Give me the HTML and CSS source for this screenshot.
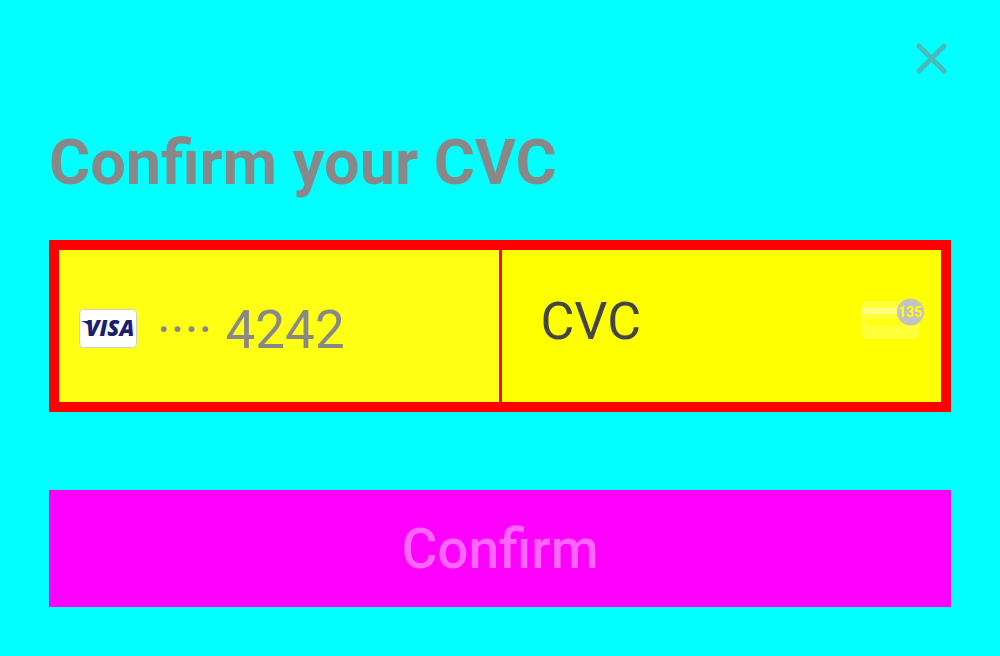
FILE: index.html
```html
<!DOCTYPE html>
<html lang="en">
<head>
<meta charset="utf-8">
<meta name="viewport" content="width=device-width, initial-scale=1">
<title>Confirm your CVC</title>
<link rel="stylesheet" href="styles.css">
</head>
<body>
<main class="sheet">
  <header class="sheet-top">
    <button class="close" type="button" aria-label="Close">
      <svg class="close-icon" viewBox="0 0 32 32" aria-hidden="true"><path d="M4 4 29 29M29 4 4 29"/></svg>
    </button>
  </header>
  <form class="form">
    <h1 class="title">Confirm your CVC</h1>
    <div class="field">
      <div class="card">
        <svg class="visa" viewBox="0 0 58 39" role="img" aria-label="Visa">
          <rect class="visa-plate" x=".5" y=".5" width="57" height="38" rx="4"/>
          <text class="visa-text" x="7" y="27">VISA</text>
          <path class="visa-mark" d="M3 12H9Q11 12 11.500 14L13 22Q10 14 3 12.500Z"/>
        </svg>
        <span class="digits">···· 4242</span>
      </div>
      <div class="cvc">
        <input class="cvc-input" type="text" inputmode="numeric" placeholder="CVC" aria-label="CVC">
        <svg class="cvc-icon" viewBox="0 0 64 42" aria-hidden="true">
          <rect x="1" y="3" width="57" height="38" rx="4" fill="#ffff38"/>
          <rect x="1" y="10" width="57" height="6" fill="#ffff80"/>
          <rect x="5" y="21" width="50" height="6" rx="3" fill="#ffff10"/>
          <circle cx="49.500" cy="14" r="13.500" fill="#c2c2c2"/>
          <text class="cvc-badge" x="49" y="19" text-anchor="middle">135</text>
        </svg>
      </div>
    </div>
    <button class="submit" type="submit" disabled>Confirm</button>
  </form>
</main>
</body>
</html>
```
FILE: styles.css
```css
* { box-sizing: border-box; }

body {
  margin: 0;
  min-height: 100vh;
  background: #0ff;
  font-family: Roboto, "Liberation Sans", sans-serif;
}

.sheet { padding: 38px 49px 49px; }

.sheet-top {
  display: flex;
  justify-content: flex-end;
}

.close {
  display: flex;
  padding: 4px;
  border: 0;
  background: none;
}

.close-icon {
  width: 32px;
  height: 32px;
  fill: none;
  stroke: #4bb9b9;
  stroke-width: 5;
  stroke-linecap: round;
}

.form {
  display: flex;
  flex-direction: column;
}

.title {
  margin: 47px 0 39px;
  font-size: 63px;
  line-height: 76px;
  font-weight: 700;
  color: #888;
}

.field {
  display: grid;
  grid-template-columns: minmax(0, 1fr) minmax(0, 1fr);
  gap: 3px;
  border: 10px solid #f00;
  background: #f00;
}

.card {
  display: flex;
  align-items: flex-start;
  gap: 20px;
  padding: 46px 20px 38px;
  background: #ffff14;
}

.visa {
  flex: none;
  width: 58px;
  height: 39px;
  margin-top: 13px;
}

.visa-plate {
  fill: #fff;
  stroke: #ccd;
}

.visa-text {
  font: italic 800 22px "Open Sans", sans-serif;
  fill: #191e70;
}

.visa-mark { fill: #191e70; }

.digits {
  font-size: 53px;
  line-height: 68px;
  white-space: nowrap;
  color: #888;
}

.cvc {
  display: flex;
  align-items: flex-start;
  padding: 36px 16px 46px 39px;
  background: #ff0;
}

.cvc-input {
  flex: 1;
  min-width: 0;
  height: 70px;
  padding: 0;
  border: 0;
  outline: 0;
  background: transparent;
  font: 400 52px Roboto, "Liberation Sans", sans-serif;
  color: #444;
}

.cvc-input::placeholder {
  color: #444;
  opacity: 1;
}

.cvc-icon {
  flex: none;
  width: 64px;
  height: 42px;
  margin-top: 12px;
}

.cvc-badge {
  font: 700 14px Roboto, sans-serif;
  fill: #ff0;
}

.submit {
  margin-top: 78px;
  padding: 25px 24px 23px;
  border: 0;
  background: #f0f;
  font: 500 55px/69px Roboto, "Liberation Sans", sans-serif;
  color: #ff66ff;
}
```
